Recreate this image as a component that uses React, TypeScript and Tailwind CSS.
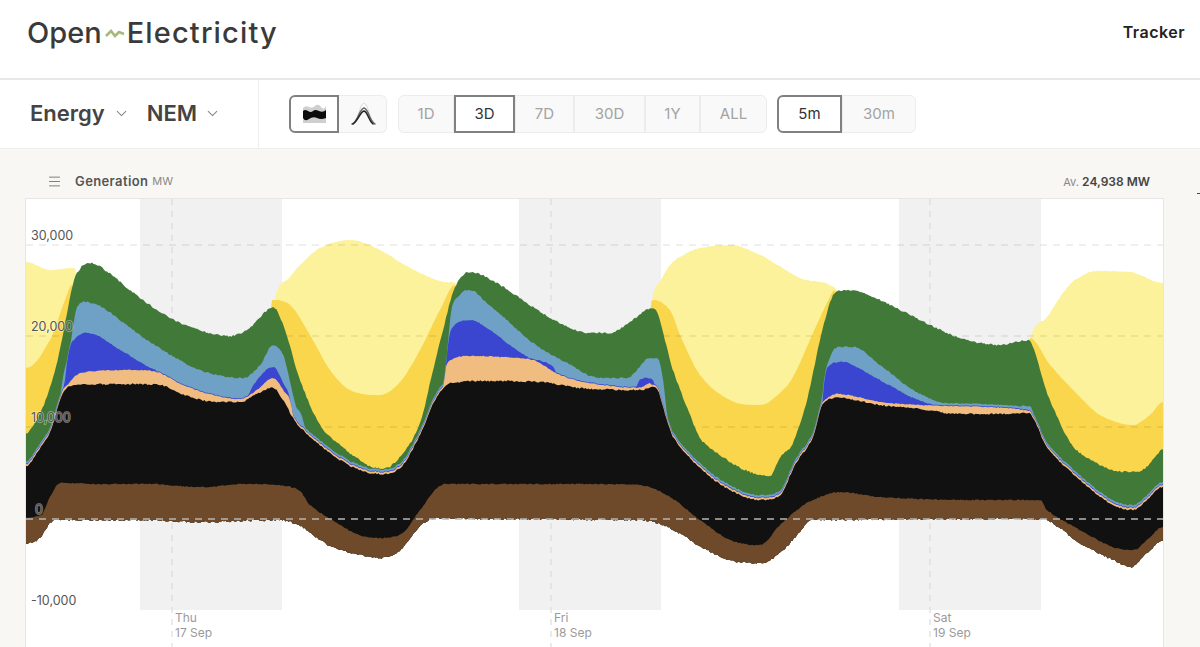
import { ChevronDown, Menu } from "lucide-react";

type Pt = [number, number];

// all curve points are page coordinates read off the chart
const brownBottom: Pt[] = [[26, 543], [40, 538], [50, 523], [60, 520], [150, 520], [200, 522], [280, 520], [300, 526], [330, 546], [360, 555], [380, 558], [400, 550], [420, 526], [435, 518], [500, 519], [640, 520], [670, 528], [700, 546], [730, 560], [760, 563], [780, 553], [797, 535], [813, 520], [1040, 519], [1047, 520], [1080, 543], [1113, 560], [1130, 567], [1147, 553], [1163, 540]];
const brownTop: Pt[] = [[26, 518], [40, 515], [43, 513], [50, 497], [60, 483], [100, 484], [150, 484], [200, 487], [250, 484], [285, 486], [300, 491], [310, 505], [340, 525], [360, 535], [380, 538], [400, 535], [420, 510], [435, 490], [445, 484], [500, 484], [560, 484], [640, 485], [670, 497], [700, 520], [730, 540], [760, 545], [780, 525], [797, 510], [813, 500], [840, 492], [880, 497], [960, 500], [1040, 500], [1047, 510], [1080, 530], [1113, 547], [1133, 550], [1147, 540], [1163, 527]];
const black: Pt[] = [[26, 466], [40, 448], [50, 432], [60, 400], [67, 388], [80, 385], [133, 384], [160, 385], [187, 396], [217, 402], [240, 402], [257, 394], [273, 388], [283, 400], [293, 418], [300, 427], [320, 445], [340, 460], [360, 470], [380, 474], [400, 468], [420, 435], [435, 400], [447, 385], [460, 382], [480, 381], [540, 382], [580, 388], [640, 390], [655, 387], [667, 420], [673, 437], [700, 468], [730, 490], [760, 500], [780, 495], [795, 465], [813, 437], [823, 403], [838, 398], [880, 405], [920, 409], [960, 414], [1000, 414], [1028, 413], [1047, 447], [1080, 480], [1113, 505], [1133, 510], [1147, 500], [1163, 487]];
const peach: Pt[] = [[26, 600], [50, 600], [57, 417], [70, 382], [87, 372], [133, 370], [157, 372], [183, 385], [217, 396], [240, 399], [257, 390], [273, 378], [283, 390], [293, 415], [305, 600], [430, 600], [447, 363], [470, 356], [500, 357], [533, 360], [560, 375], [590, 383], [640, 388], [650, 383], [660, 600], [815, 600], [823, 410], [838, 394], [880, 402], [920, 405], [1030, 411], [1040, 600], [1163, 600]];
const blue: Pt[] = [[26, 600], [55, 600], [65, 380], [77, 337], [88, 333], [120, 350], [150, 368], [157, 372], [165, 395], [235, 410], [245, 400], [257, 380], [273, 367], [283, 383], [292, 415], [305, 600], [438, 600], [447, 355], [455, 325], [470, 320], [490, 330], [510, 345], [530, 358], [553, 367], [565, 395], [630, 400], [640, 380], [648, 378], [655, 385], [662, 600], [815, 600], [823, 395], [830, 365], [843, 362], [857, 367], [880, 380], [913, 398], [940, 408], [950, 420], [1040, 600], [1163, 600]];
const lightBlue: Pt[] = [[26, 600], [45, 600], [60, 400], [70, 347], [77, 307], [85, 302], [100, 306], [120, 320], [150, 342], [200, 370], [243, 378], [260, 365], [273, 345], [280, 350], [285, 360], [295, 403], [305, 432], [320, 600], [435, 600], [450, 320], [458, 297], [470, 290], [487, 303], [507, 320], [533, 343], [567, 363], [600, 378], [627, 378], [650, 358], [657, 358], [667, 415], [680, 600], [810, 600], [822, 400], [830, 357], [840, 347], [853, 347], [880, 365], [913, 390], [947, 405], [980, 408], [1027, 406], [1036, 425], [1050, 600], [1163, 600]];
const green: Pt[] = [[26, 434], [30, 430], [43, 407], [57, 363], [67, 313], [75, 277], [90, 263], [105, 270], [130, 290], [160, 312], [190, 327], [230, 336], [250, 328], [262, 315], [273, 307], [285, 330], [300, 380], [320, 425], [340, 445], [360, 460], [380, 470], [400, 457], [420, 423], [433, 370], [443, 330], [455, 287], [470, 272], [500, 285], [530, 305], [560, 323], [590, 333], [610, 333], [630, 322], [653, 308], [673, 370], [690, 415], [700, 438], [720, 455], [745, 470], [770, 476], [780, 457], [793, 443], [807, 400], [813, 373], [823, 327], [835, 293], [848, 290], [880, 300], [920, 320], [960, 338], [1000, 345], [1028, 340], [1047, 393], [1067, 437], [1080, 453], [1113, 470], [1133, 472], [1147, 467], [1163, 450]];
const gold: Pt[] = [[26, 368], [50, 340], [65, 300], [72, 285], [90, 500], [262, 500], [272, 300], [290, 305], [310, 335], [330, 370], [350, 390], [380, 395], [400, 382], [420, 350], [440, 310], [455, 285], [470, 500], [640, 500], [652, 300], [670, 310], [680, 335], [700, 375], [730, 400], [760, 405], [780, 393], [793, 377], [813, 333], [827, 303], [835, 290], [845, 500], [1020, 500], [1030, 338], [1050, 365], [1080, 397], [1100, 415], [1133, 425], [1150, 415], [1163, 402]];
const paleYellow: Pt[] = [[26, 262], [50, 270], [75, 268], [90, 500], [262, 500], [275, 298], [290, 277], [300, 265], [320, 248], [350, 240], [380, 250], [410, 268], [440, 281], [458, 284], [470, 500], [640, 500], [652, 300], [660, 282], [670, 265], [685, 254], [700, 248], [730, 245], [760, 255], [800, 278], [837, 290], [850, 500], [1020, 500], [1030, 340], [1047, 317], [1063, 293], [1075, 280], [1097, 271], [1130, 272], [1163, 283]];

const sampleXs = Array.from({ length: 760 }, (_, i) => 26 + i * 1.5);

const sample = (pts: Pt[], seed: number, noise: number) => {
  const slopes = pts.map((p, i) => {
    if (i === 0 || i === pts.length - 1) return 0;
    const d0 = (p[1] - pts[i - 1][1]) / (p[0] - pts[i - 1][0]);
    const d1 = (pts[i + 1][1] - p[1]) / (pts[i + 1][0] - p[0]);
    if (d0 * d1 <= 0) return 0;
    const m = (pts[i + 1][1] - pts[i - 1][1]) / (pts[i + 1][0] - pts[i - 1][0]);
    return Math.sign(m) * Math.min(Math.abs(m), 3 * Math.abs(d0), 3 * Math.abs(d1));
  });
  return sampleXs.map((x) => {
    let i = 0;
    while (i < pts.length - 2 && x > pts[i + 1][0]) i++;
    const h = pts[i + 1][0] - pts[i][0];
    const t = Math.min(1, (x - pts[i][0]) / h);
    const y =
      (2 * t ** 3 - 3 * t ** 2 + 1) * pts[i][1] +
      (t ** 3 - 2 * t ** 2 + t) * h * slopes[i] +
      (-2 * t ** 3 + 3 * t ** 2) * pts[i + 1][1] +
      (t ** 3 - t ** 2) * h * slopes[i + 1];
    const r = Math.sin(x * 12.9898 + seed) * 43758.5453;
    return y + (r - Math.floor(r) - 0.5) * noise;
  });
};

const bottomYs = sample(brownBottom, 1, 2);
const brownYs = sample(brownTop, 2, 1.2);
const blackYs = sample(black, 3, 1.6);
const peachYs = sample(peach, 4, 1).map((y, i) => Math.min(y, blackYs[i] - 2));
const blueYs = sample(blue, 5, 1.2).map((y, i) => Math.min(y, peachYs[i] - 0.8));
const lightBlueYs = sample(lightBlue, 6, 1.4).map((y, i) => Math.min(y, blueYs[i] - 2));
const greenYs = sample(green, 7, 1.8).map((y, i) => Math.min(y, lightBlueYs[i] - 1));
const goldYs = sample(gold, 8, 0.5);
const paleYs = sample(paleYellow, 9, 0.8);

const areaPath = (ys: number[]) => {
  const top = ys.map((y, i) => `${sampleXs[i]},${y.toFixed(1)}`);
  const bottom = bottomYs.map((y, i) => `${sampleXs[i]},${y.toFixed(1)}`).reverse();
  return `M${top.join("L")}L${bottom.join("L")}Z`;
};

const lightLayers: [number[], string][] = [
  [paleYs, "#fcf29b"],
  [goldYs, "#f9d64c"],
];
const darkLayers: [number[], string][] = [
  [greenYs, "#417a38"],
  [lightBlueYs, "#6ea1c5"],
  [blueYs, "#3a46cf"],
  [peachYs, "#f1bc80"],
  [blackYs, "#111111"],
  [brownYs, "#6f4a2a"],
];

const dayBands = [140, 519, 899];
const dayLines: [number, string, string][] = [
  [172, "Thu", "17 Sep"],
  [551, "Fri", "18 Sep"],
  [930, "Sat", "19 Sep"],
];
const gridLines: [number, string, number][] = [
  [245, "30,000", 31],
  [336, "20,000", 31],
  [427, "10,000", 31],
];

const ranges = [
  { label: "1D", w: "w-[56px]" },
  { label: "3D", w: "w-[61px]", active: true },
  { label: "7D", w: "w-[59px]" },
  { label: "30D", w: "w-[71px]" },
  { label: "1Y", w: "w-[55px]" },
  { label: "ALL", w: "w-[67px]" },
];

const segBase = "flex h-[38px] items-center justify-center text-[15px]";
const segActive = "border-2 border-[#808080] bg-white text-[#333333]";
const segIdle = "border border-[#ececec] bg-[#f9f9f9] text-[#a3a3a3]";

const AreaIcon = () => (
  <svg width="28" height="26" viewBox="0 0 28 26">
    <path d="M3 7 Q6 4 9 6 T15 5 T21 6 T26 5 V22 H3 Z" fill="#cfcfcf" />
    <path d="M3 10 Q5 8 8 10 T13 10 T19 10 T26 9 V17 Q21 19 17 17 T9 18 T3 17 Z" fill="#0c0c0c" />
  </svg>
);

const LinesIcon = () => (
  <svg width="28" height="26" viewBox="0 0 28 26" fill="none" strokeLinecap="round">
    <path d="M4 23 C10 20 10 3 15 2 C20 3 20 20 26 23" stroke="#dddddd" strokeWidth="1" />
    <path d="M3 23 C9 21 10 8 15 7 C20 8 20 20 26 23" stroke="#666666" strokeWidth="1.4" />
    <path d="M4 23 C9 20 11 11 15 10 C19 11 19 19 24 23" stroke="#222222" strokeWidth="1.5" />
  </svg>
);

const Chart = () => (
  <svg className="block h-[449px] w-[1137px]" viewBox="26 199 1137 449">
    {dayBands.map((x) => (
      <rect key={x} x={x} y={199} width={142} height={411} fill="#f1f1f1" />
    ))}
    {dayLines.map(([x]) => (
      <line key={x} x1={x} x2={x} y1={199} y2={647} stroke="#d6d6d6" strokeDasharray="6 6" />
    ))}
    {lightLayers.map(([ys, color]) => (
      <path key={color} d={areaPath(ys)} fill={color} />
    ))}
    {gridLines.map(([y]) => (
      <line key={y} x1={26} x2={1163} y1={y} y2={y} stroke="#000000" strokeOpacity={0.13} strokeDasharray="7 6" />
    ))}
    {darkLayers.map(([ys, color]) => (
      <path key={color} d={areaPath(ys)} fill={color} />
    ))}
    <line x1={26} x2={1163} y1={519} y2={519} stroke="#b5b5b5" strokeWidth={1.5} strokeDasharray="7 6" />
    <g fontFamily="Inter, sans-serif" fontSize="12.5" fill="#555555" stroke="#ffffff" strokeOpacity={0.45} strokeWidth={1.5} paintOrder="stroke">
      {gridLines.map(([y, label, x]) => (
        <text key={label} x={x} y={y - 5}>
          {label}
        </text>
      ))}
      <text x={35} y={514}>
        0
      </text>
      <text x={31} y={605}>
        -10,000
      </text>
    </g>
    <g fontFamily="Inter, sans-serif" fontSize="12" fill="#9a9a9a">
      {dayLines.map(([x, day, date]) => (
        <text key={x} x={x + 3}>
          <tspan x={x + 3} y={622}>
            {day}
          </tspan>
          <tspan x={x + 3} y={637}>
            {date}
          </tspan>
        </text>
      ))}
    </g>
  </svg>
);

export default function App() {
  return (
    <div className="flex h-[647px] w-[1200px] flex-col overflow-hidden bg-white font-['Inter',sans-serif]">
      <header className="flex h-[80px] shrink-0 items-center justify-between border-b-2 border-[#e8e8e8] pb-[14px] pl-[27px] pr-[15px]">
        <div className="flex items-center text-[29px] font-medium leading-none text-[#3a3a3a]">
          <span>Open</span>
          <svg width="20" height="12" viewBox="0 0 20 12" className="ml-[3px] mr-[2px] mt-[3px]" fill="none">
            <path d="M1 8 L6 3 L10 8 L14 4 L19 6" stroke="#a8b87c" strokeWidth="2.6" />
          </svg>
          <span className="tracking-[0.04em]">Electricity</span>
        </div>
        <span className="text-[16px] font-semibold tracking-[0.03em] text-[#222222]">Tracker</span>
      </header>

      <div className="flex h-[69px] shrink-0 items-stretch border-b border-[#eeeeee]">
        <div className="flex w-[259px] shrink-0 items-center border-r border-[#eeeeee] pb-[2px] pl-[30px] text-[22px] font-semibold text-[#444444]">
          <span>Energy</span>
          <ChevronDown size={17} strokeWidth={1.5} className="ml-[8px] text-[#888888]" />
          <span className="ml-[17px]">NEM</span>
          <ChevronDown size={17} strokeWidth={1.5} className="ml-[7px] text-[#888888]" />
        </div>
        <div className="flex items-center pl-[30px]">
          <div className="flex">
            <div className={`${segBase} ${segActive} w-[50px] rounded-l-md`}>
              <AreaIcon />
            </div>
            <div className={`${segBase} ${segIdle} w-[48px] rounded-r-md border-l-0`}>
              <LinesIcon />
            </div>
          </div>
          <div className="ml-[11px] flex">
            {ranges.map((r, i) => (
              <div
                key={r.label}
                className={`${segBase} ${r.w} ${r.active ? segActive : segIdle} ${i === 0 ? "rounded-l-md" : ""} ${i === ranges.length - 1 ? "rounded-r-md" : ""}`}
              >
                {r.label}
              </div>
            ))}
          </div>
          <div className="ml-[10px] flex">
            <div className={`${segBase} ${segActive} w-[65px] rounded-l-md`}>5m</div>
            <div className={`${segBase} ${segIdle} w-[74px] rounded-r-md`}>30m</div>
          </div>
        </div>
      </div>

      <main className="flex flex-1 overflow-hidden bg-[#f8f7f3] pl-[25px]">
        <div className="w-[1139px] shrink-0">
          <div className="flex h-[49px] items-center justify-between pl-[22px] pr-[14px] pt-[16px]">
            <div className="flex items-center">
              <Menu size={15} strokeWidth={1.5} className="text-[#777777]" />
              <span className="ml-[13px] text-[13px] font-semibold tracking-[0.03em] text-[#555555]">Generation</span>
              <span className="ml-[4px] text-[11px] text-[#888888]">MW</span>
            </div>
            <div className="text-[11px] text-[#888888]">
              Av. <span className="text-[12px] font-semibold text-[#444444]">24,938 MW</span>
            </div>
          </div>
          <div className="border-l border-r border-t border-[#e6e6e6] bg-white">
            <Chart />
          </div>
        </div>
        <div className="flex-1 pl-[33px] pt-[44px]">
          <div className="h-px w-[3px] bg-[#444444]" />
        </div>
      </main>
    </div>
  );
}
